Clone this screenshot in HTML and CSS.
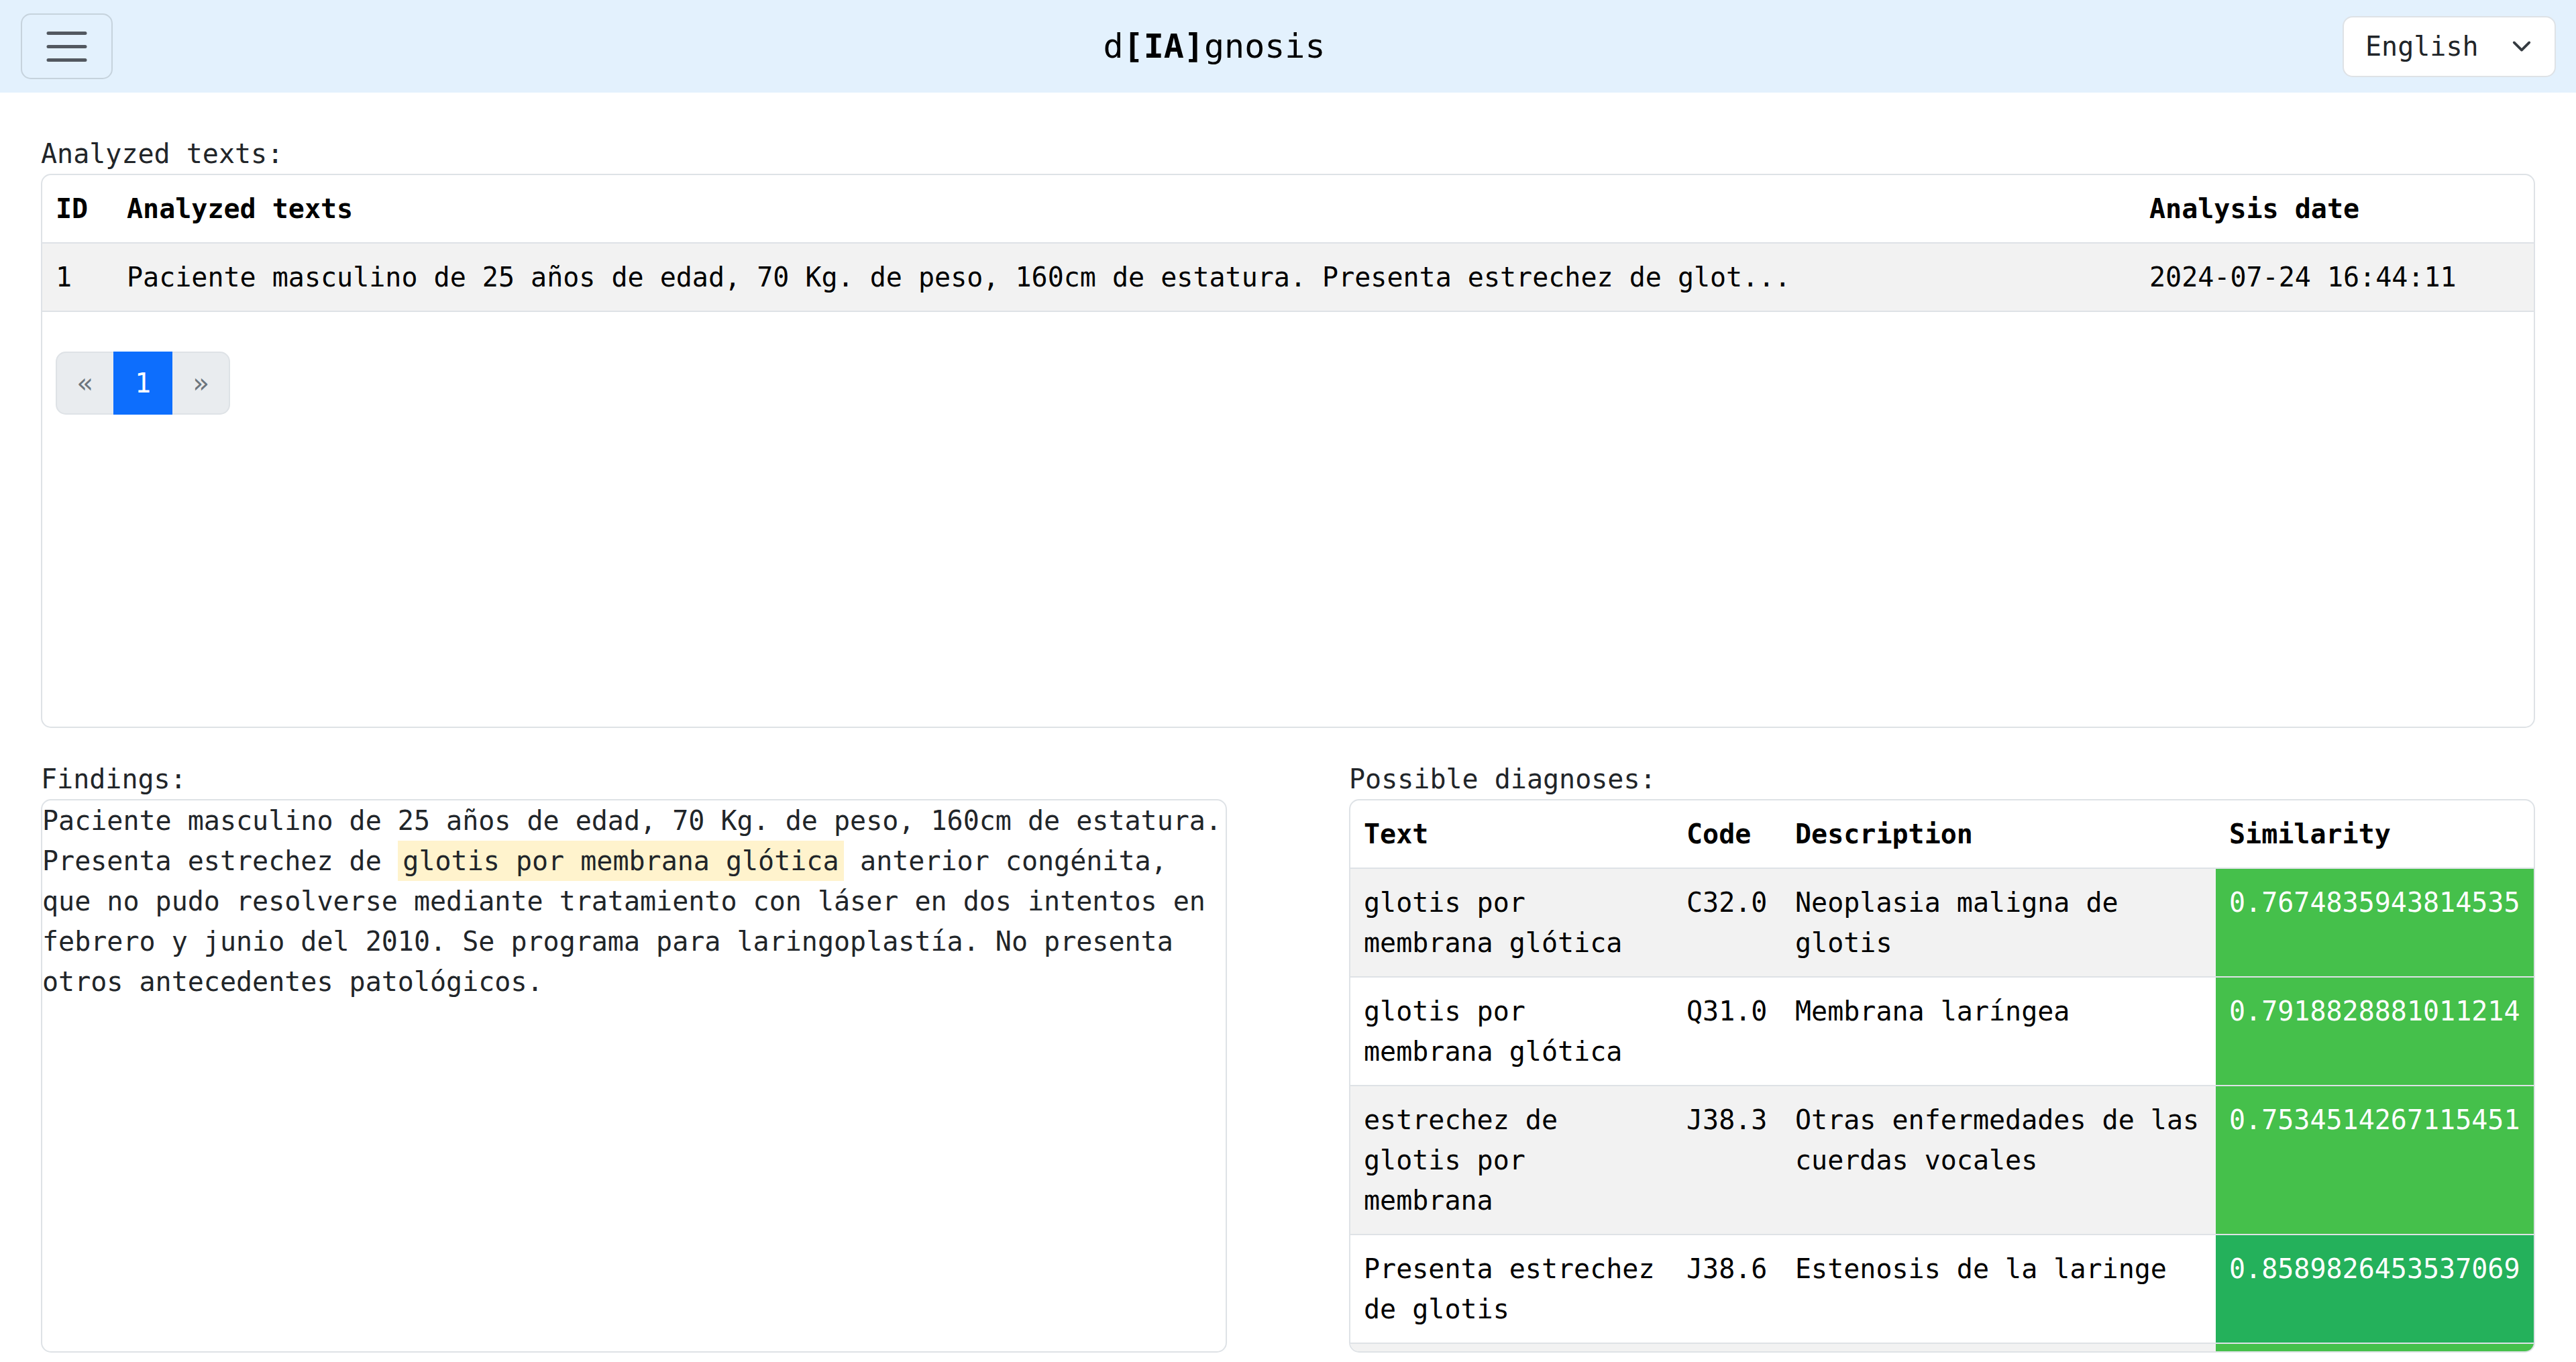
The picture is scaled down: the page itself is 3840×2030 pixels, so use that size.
FILE: index.html
```html
<!DOCTYPE html>
<html lang="en">
<head>
<meta charset="utf-8">
<title>d[IA]gnosis</title>
<link rel="stylesheet" href="styles.css">
</head>
<body>
<nav class="navbar">
  <button class="toggler" type="button" aria-label="Toggle navigation">
    <svg class="toggler-icon" viewBox="0 0 30 30" width="75" height="75"><path d="M4 7h22M4 15h22M4 23h22" stroke="#525860" stroke-width="2" stroke-linecap="round" fill="none"/></svg>
  </button>
  <div class="brand">d<b>[IA]</b>gnosis</div>
  <div class="lang-select">
    <span>English</span>
    <svg class="chev" viewBox="0 0 16 16" width="30" height="30"><path d="m2 5 6 6 6-6" fill="none" stroke="#343a40" stroke-width="2" stroke-linecap="round" stroke-linejoin="round"/></svg>
  </div>
</nav>

<main class="main">
  <div class="label">Analyzed texts:</div>
  <div class="card card-texts">
    <table class="table">
      <colgroup>
        <col class="c-id">
        <col>
        <col class="c-date">
      </colgroup>
      <thead>
        <tr><th>ID</th><th>Analyzed texts</th><th>Analysis date</th></tr>
      </thead>
      <tbody>
        <tr class="striped"><td>1</td><td>Paciente masculino de 25 años de edad, 70 Kg. de peso, 160cm de estatura. Presenta estrechez de glot...</td><td>2024-07-24 16:44:11</td></tr>
      </tbody>
    </table>
    <ul class="pagination">
      <li class="page disabled">«</li>
      <li class="page active">1</li>
      <li class="page disabled">»</li>
    </ul>
  </div>

  <div class="results">
    <section class="col">
      <div class="label">Findings:</div>
      <div class="card findings">Paciente masculino de 25 años de edad, 70 Kg. de peso, 160cm de estatura. Presenta estrechez de <mark>glotis por membrana glótica</mark> anterior congénita, que no pudo resolverse mediante tratamiento con láser en dos intentos en febrero y junio del 2010. Se programa para laringoplastía. No presenta otros antecedentes patológicos.</div>
    </section>
    <section class="col">
      <div class="label">Possible diagnoses:</div>
      <div class="card diag-box">
        <table class="table">
          <colgroup>
            <col class="c-text">
            <col class="c-code">
            <col class="c-desc">
            <col class="c-sim">
          </colgroup>
          <thead>
            <tr><th>Text</th><th>Code</th><th>Description</th><th>Similarity</th></tr>
          </thead>
          <tbody>
            <tr class="striped"><td>glotis por membrana glótica</td><td>C32.0</td><td>Neoplasia maligna de glotis</td><td class="sim sim-mid">0.7674835943814535</td></tr>
            <tr><td>glotis por membrana glótica</td><td>Q31.0</td><td>Membrana laríngea</td><td class="sim sim-mid">0.7918828881011214</td></tr>
            <tr class="striped"><td>estrechez de glotis por membrana</td><td>J38.3</td><td>Otras enfermedades de las cuerdas vocales</td><td class="sim sim-mid">0.7534514267115451</td></tr>
            <tr><td>Presenta estrechez de glotis</td><td>J38.6</td><td>Estenosis de la laringe</td><td class="sim sim-high">0.8589826453537069</td></tr>
            <tr class="striped filler"><td></td><td></td><td></td><td class="sim sim-mid"></td></tr>
          </tbody>
        </table>
      </div>
    </section>
  </div>
</main>
</body>
</html>
```

FILE: styles.css
```css
* {
  box-sizing: border-box;
}

html,
body {
  margin: 0;
  padding: 0;
}

body {
  font-family: "DejaVu Sans Mono", monospace;
  font-size: 40px;
  line-height: 60px;
  color: #212529;
  background: #ffffff;
}

/* ---------- navbar ---------- */
.navbar {
  display: flex;
  align-items: center;
  justify-content: space-between;
  height: 138px;
  padding: 20px 30px 20px 31px;
  background: #e3f1fd;
}

.toggler {
  width: 137px;
  height: 98px;
  padding: 0;
  border: 2px solid #c6d3dd;
  border-radius: 15px;
  background: transparent;
  display: flex;
  align-items: center;
  justify-content: center;
}

.toggler-icon {
  display: block;
  width: 75px;
  height: 75px;
}

.brand {
  font-size: 50px;
  line-height: 75px;
  color: #000;
  margin-right: 40px;
}

.brand b {
  font-weight: 700;
}

.lang-select {
  width: 318px;
  height: 91px;
  display: flex;
  align-items: center;
  justify-content: space-between;
  padding: 0 34px 0 32px;
  border: 2px solid #dee2e6;
  border-radius: 15px;
  background: #ffffff;
  color: #212529;
}

.chev {
  display: block;
  width: 30px;
  height: 30px;
}

/* ---------- main ---------- */
.main {
  padding: 61px 61px 0;
}

.label {
  line-height: 60px;
  color: #212529;
}

.card {
  border: 2px solid #dee2e6;
  border-radius: 15px;
  background: #fff;
  overflow: hidden;
}

.card-texts {
  height: 826px;
  margin-bottom: 46px;
}

.table {
  width: 100%;
  table-layout: fixed;
  border-collapse: separate;
  border-spacing: 0;
  color: #000;
}

.table th,
.table td {
  padding: 20px;
  text-align: left;
  vertical-align: top;
  line-height: 60px;
  border-bottom: 2px solid #dee2e6;
}

.table th {
  font-weight: 700;
}

.table td {
  font-weight: 400;
}

.striped td {
  background: #f2f2f2;
}

.filler td {
  height: 160px;
}

.c-id { width: 106px; }
.c-date { width: 593px; }

.c-text { width: 481px; }
.c-code { width: 162px; }
.c-desc { width: 647px; }
.c-sim { width: 474px; }

/* ---------- pagination ---------- */
.pagination {
  display: flex;
  list-style: none;
  margin: 59px 0 0 20px;
  padding: 0;
}

.page {
  padding: 15px 30px;
  line-height: 60px;
  border: 2px solid #dee2e6;
  margin-left: -2px;
  text-align: center;
}

.page:first-child {
  margin-left: 0;
  border-radius: 15px 0 0 15px;
}

.page:last-child {
  border-radius: 0 15px 15px 0;
}

.page.disabled {
  color: #6c757d;
  background: #e9ecef;
}

.page.active {
  color: #fff;
  background: #0d6efd;
  border-color: #0d6efd;
  position: relative;
  z-index: 1;
}

/* ---------- results ---------- */
.results {
  display: grid;
  grid-template-columns: 1fr 1fr;
  column-gap: 182px;
}

.findings {
  height: 825px;
  padding: 0;
  line-height: 60px;
}

mark {
  padding: 6.7px 7.5px;
  background: #fff3cd;
  color: inherit;
}

.diag-box {
  height: 825px;
}

.table td.sim {
  color: #fff;
}

.table td.sim-mid {
  background: #45c04b;
}

.table td.sim-high {
  background: #24b15b;
}
```
